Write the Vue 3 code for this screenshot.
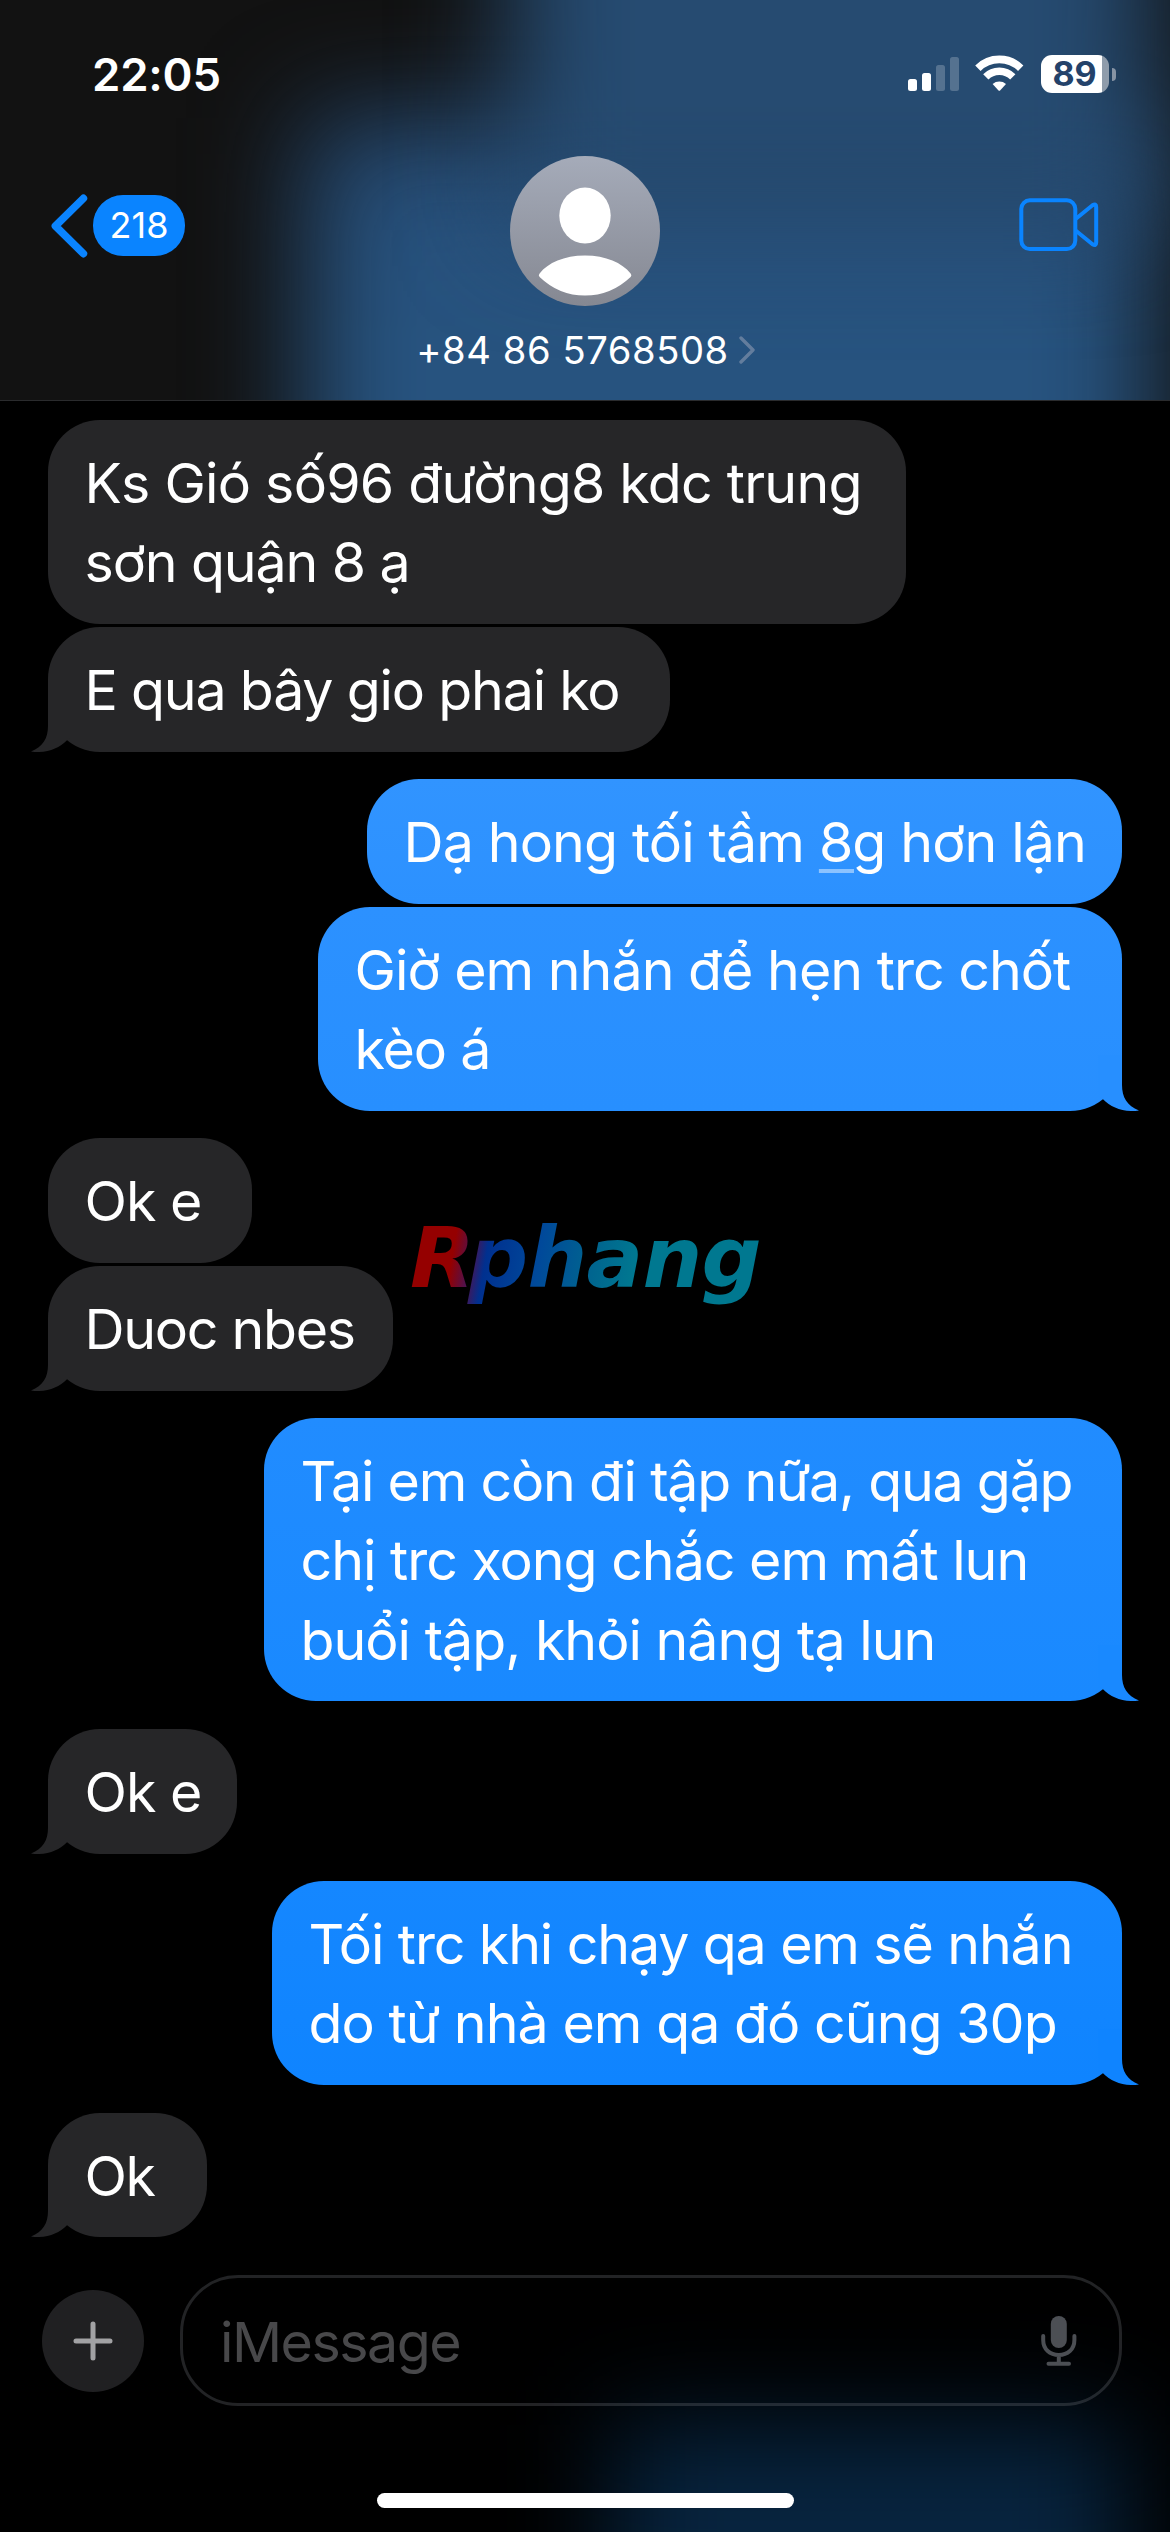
<script setup>
const TAIL = 'M17 0V30C17 42 12 51 0 55.4C2 56 5 56 8 56C20 56 29 51 36 44.3L41 40V0Z'

const groups = [
  {
    side: 'in',
    bubbles: [
      { width: 858, lines: [{ text: 'Ks Gió số96 đường8 kdc trung', track: -0.76 }, { text: 'sơn quận 8 ạ', track: -1.1 }] },
      { width: 622, tail: true, lines: [{ text: 'E qua bây gio phai ko', track: -1.2 }] },
    ],
  },
  {
    side: 'out',
    bubbles: [
      { width: 755, from: '#3194ff', to: '#2c91ff', lines: [{ text: 'Dạ hong tối tầm ', link: '8g', after: ' hơn lận', track: -0.86 }] },
      { width: 804, tail: true, from: '#2c91ff', to: '#278fff', lines: [{ text: 'Giờ em nhắn để hẹn trc chốt', track: -0.98 }, { text: 'kèo á', track: -1.2 }] },
    ],
  },
  {
    side: 'in',
    bubbles: [
      { width: 204, lines: [{ text: 'Ok e', track: -1 }] },
      { width: 345, tail: true, lines: [{ text: 'Duoc nbes', track: -1.3 }] },
    ],
  },
  {
    side: 'out',
    bubbles: [
      {
        width: 858, tail: true, from: '#218cff', to: '#1989ff',
        lines: [
          { text: 'Tại em còn đi tập nữa, qua gặp', track: -1.23 },
          { text: 'chị trc xong chắc em mất lun', track: -1.01 },
          { text: 'buổi tập, khỏi nâng tạ lun', track: -0.99 },
        ],
      },
    ],
  },
  { side: 'in', bubbles: [{ width: 189, tail: true, lines: [{ text: 'Ok e', track: -1 }] }] },
  {
    side: 'out',
    bubbles: [
      { width: 850, tail: true, from: '#1587ff', to: '#0f84ff', lines: [{ text: 'Tối trc khi chạy qa em sẽ nhắn', track: -1.12 }, { text: 'do từ nhà em qa đó cũng 30p', track: -0.95 }] },
    ],
  },
  { side: 'in', bubbles: [{ width: 159, tail: true, lines: [{ text: 'Ok', track: -1.4 }] }] },
]

const bubbleStyle = (b) => ({
  width: `${b.width}px`,
  '--from': b.from ?? '#262628',
  '--to': b.to ?? '#262628',
})
</script>

<template>
  <div class="phone">
    <header class="header">
      <div class="glow glow-main"></div>
      <div class="glow glow-top"></div>

      <div class="status">
        <span class="time">22:05</span>
        <div class="indicators">
          <svg class="signal" width="51" height="34" viewBox="0 0 51 34" fill="#fff">
            <rect x="0" y="22" width="9" height="12" rx="2.5" />
            <rect x="14" y="16" width="9" height="18" rx="2.5" />
            <rect x="28" y="8" width="9" height="26" rx="2.5" opacity=".22" />
            <rect x="42" y="0" width="9" height="34" rx="2.5" opacity=".22" />
          </svg>
          <svg class="wifi" width="49" height="36" viewBox="0 0 49 36" fill="none" stroke="#fff">
            <path d="M2.9 13.2A30.4 30.4 0 0 1 45.7 13.2" stroke-width="7.6" />
            <path d="M10.8 21.9A19 19 0 0 1 37.8 21.9" stroke-width="7.4" />
            <path d="M17.6 29A10.5 10.5 0 0 1 31 29L25.3 35.2Q24.3 36.2 23.3 35.2Z" fill="#fff" stroke="none" />
          </svg>
          <div class="battery">
            <span class="cell">89</span>
            <span class="nub"></span>
          </div>
        </div>
      </div>

      <nav class="nav">
        <div class="back">
          <svg width="37" height="64" viewBox="0 0 37 64" fill="none" stroke="#0a84ff" stroke-width="7.6" stroke-linecap="round" stroke-linejoin="round">
            <path d="M32.4 4.4L4.4 32L32.4 59.6" />
          </svg>
          <span class="unread">218</span>
        </div>
        <div class="contact">
          <svg class="avatar" width="150" height="150" viewBox="0 0 150 150">
            <defs>
              <linearGradient id="avatarFill" x1="0" y1="0" x2="0" y2="1">
                <stop offset="0" stop-color="#a5abb9" />
                <stop offset="1" stop-color="#858892" />
              </linearGradient>
            </defs>
            <circle cx="75" cy="75" r="75" fill="url(#avatarFill)" />
            <ellipse cx="75" cy="59.6" rx="25.7" ry="28" fill="#fff" />
            <path d="M29.6 117.5C38 107 54 99.6 75 99.6S112 107 120.6 117.5Q122.2 119.3 120.6 121Q101 139.6 75 139.6T29.6 121Q28 119.3 29.6 117.5Z" fill="#fff" />
          </svg>
          <div class="name">
            <span>+84 86 5768508</span>
            <svg width="17" height="30" viewBox="0 0 17 30" fill="none" stroke="#637d9d" stroke-width="3.4" stroke-linecap="round" stroke-linejoin="round">
              <path d="M3 3L15 15L3 27" />
            </svg>
          </div>
        </div>
        <svg class="video" width="80" height="54" viewBox="0 0 80 54" fill="none" stroke="#0a84ff" stroke-width="4" stroke-linejoin="round">
          <rect x="2.3" y="2.3" width="54" height="48.8" rx="8.5" />
          <path d="M56.3 21.2L73.5 7.3Q77.2 5 77.2 9V44.5Q77.2 48.5 73.5 46.2L56.3 32.2" />
        </svg>
      </nav>
    </header>

    <main class="thread">
      <section v-for="(g, gi) in groups" :key="gi" class="group" :class="g.side">
        <div v-for="(b, bi) in g.bubbles" :key="bi" class="bubble" :style="bubbleStyle(b)">
          <p v-for="(l, li) in b.lines" :key="li" :style="{ letterSpacing: `${l.track}px` }">{{ l.text }}<u v-if="l.link">{{ l.link }}</u>{{ l.after }}</p>
          <svg v-if="b.tail" class="tail" width="41" height="56" viewBox="0 0 41 56"><path :d="TAIL" /></svg>
        </div>
      </section>
      <div class="watermark"><span>R</span>phang</div>
    </main>

    <footer class="composer">
      <div class="glow glow-bottom"></div>
      <div class="bar">
        <div class="plus">
          <svg width="40" height="40" viewBox="0 0 40 40" stroke="#a2a2a4" stroke-width="5" stroke-linecap="round">
            <path d="M20 3V37M3 20H37" />
          </svg>
        </div>
        <div class="field">
          <span>iMessage</span>
          <svg width="36" height="50" viewBox="0 0 36 50" fill="none" stroke="#4c4f54" stroke-width="4" stroke-linecap="round">
            <rect x="9.8" y="0" width="16" height="32" rx="8" fill="#4c4f54" stroke="none" />
            <path d="M2.2 20V24C2.2 33.500 9 39 17.8 39S33.4 33.5 33.4 24V20M17.8 39V47M7.5 47.8H28" />
          </svg>
        </div>
      </div>
      <div class="home"></div>
    </footer>
  </div>
</template>

<style>
body {
  background: #000;
}
</style>

<style scoped>
.phone {
  display: flex;
  flex-direction: column;
  width: 1170px;
  height: 2532px;
  overflow: hidden;
  background: #000;
  color: #fff;
  font-family: Inter, "Noto Sans", sans-serif;
}

.glow {
  position: absolute;
  pointer-events: none;
}

/* Header */
.header {
  position: relative;
  flex: none;
  height: 401px;
  box-sizing: border-box;
  border-bottom: 1px solid #2a2b2d;
  overflow: hidden;
  background: #121212;
}
.glow-main {
  left: 306px;
  top: 118px;
  width: 846px;
  height: 520px;
  background: linear-gradient(#264b74, #27537f 35%);
  filter: blur(54px);
}
.glow-top {
  left: 512px;
  top: -250px;
  width: 640px;
  height: 480px;
  background: #264b71;
  filter: blur(54px);
}
.status,
.nav {
  position: relative;
}
.status {
  display: flex;
  align-items: center;
  justify-content: space-between;
  height: 148px;
  padding: 0 54px 0 92px;
}
.time {
  font-size: 45.5px;
  font-weight: 600;
  letter-spacing: -0.2px;
}
.indicators {
  display: flex;
  align-items: center;
}
.wifi {
  margin-left: 16px;
  margin-top: -2px;
}
.battery {
  display: flex;
  align-items: center;
  margin-left: 17px;
}
.cell {
  width: 68px;
  height: 38px;
  box-sizing: border-box;
  padding-right: 1px;
  border-radius: 11px;
  background: linear-gradient(90deg, #fff 61px, #8f9cab 61px);
  color: #24426a;
  font-size: 34px;
  font-weight: 700;
  line-height: 38px;
  text-align: center;
}
.nub {
  width: 4px;
  height: 13px;
  margin-left: 3px;
  border-radius: 0 4px 4px 0;
  background: #8794a4;
}
.nav {
  display: grid;
  grid-template-columns: 1fr auto 1fr;
  align-items: start;
  padding: 8px 71px 0 51px;
}
.back {
  display: flex;
  align-items: center;
  height: 139px;
}
.unread {
  width: 92px;
  height: 61px;
  margin-left: 5px;
  border-radius: 30px;
  background: #0a84ff;
  font-size: 36px;
  line-height: 61px;
  text-align: center;
}
.contact {
  display: flex;
  flex-direction: column;
  align-items: center;
  margin-left: 21px;
}
.avatar {
  display: block;
}
.name {
  display: flex;
  align-items: center;
  gap: 9px;
  margin-top: 19.5px;
  font-size: 38.2px;
  line-height: 48px;
  letter-spacing: 0.55px;
  white-space: nowrap;
}
.video {
  justify-self: end;
  margin-top: 42px;
}

/* Messages */
.thread {
  position: relative;
  flex: 1;
  display: flex;
  flex-direction: column;
  gap: 27.5px;
  padding: 19px 48px 0;
}
.group {
  display: flex;
  flex-direction: column;
  gap: 3px;
}
.in {
  align-items: flex-start;
}
.out {
  align-items: flex-end;
}
.bubble {
  position: relative;
  box-sizing: border-box;
  padding: 23px 0 22.34px 36.5px;
  border-radius: 52px;
  background: linear-gradient(var(--from), var(--to));
}
.bubble p {
  margin: 0;
  font-size: 55.5px;
  line-height: 79.33px;
  white-space: pre;
}
.bubble u {
  text-decoration-color: rgba(255, 255, 255, 0.45);
  text-decoration-thickness: 4px;
  text-underline-offset: 7px;
}
.tail {
  position: absolute;
  left: -17px;
  bottom: 0;
  fill: var(--to);
}
.out .tail {
  left: auto;
  right: -17px;
  transform: scaleX(-1);
}
.watermark {
  position: absolute;
  left: 410px;
  top: 815px;
  padding: 0 10px 15px 0;
  background: linear-gradient(100deg, #950000 13%, #4d1250 18%, #00308f 22%, #00499a 36%, #00648f 50%, #007890 62%);
  background-clip: text;
  -webkit-background-clip: text;
  color: transparent;
  font: italic 700 84px/84px "DejaVu Sans", sans-serif;
  letter-spacing: -0.7px;
}
.watermark span {
  margin-right: -6px;
}

/* Composer */
.composer {
  position: relative;
  flex: none;
  height: 257px;
}
.glow-bottom {
  left: 612px;
  top: 150px;
  width: 512px;
  height: 320px;
  background: #07243f;
  filter: blur(52px);
}
.bar {
  position: relative;
  display: flex;
  align-items: center;
  gap: 36px;
  padding: 0 48px 0 42px;
}
.plus {
  display: flex;
  align-items: center;
  justify-content: center;
  flex: none;
  width: 102px;
  height: 102px;
  margin-top: 1px;
  border-radius: 50%;
  background: #202022;
}
.field {
  display: flex;
  flex: 1;
  align-items: center;
  justify-content: space-between;
  box-sizing: border-box;
  height: 131px;
  padding: 0 42px 0 37px;
  border: 3px solid rgba(125, 130, 135, 0.27);
  border-radius: 58px;
}
.field span {
  padding-top: 1px;
  color: #48484a;
  font-size: 55.5px;
  letter-spacing: -1.5px;
}
.home {
  position: relative;
  width: 417px;
  height: 15px;
  margin: 87px 0 0 377px;
  border-radius: 8px;
  background: #fff;
}
</style>
